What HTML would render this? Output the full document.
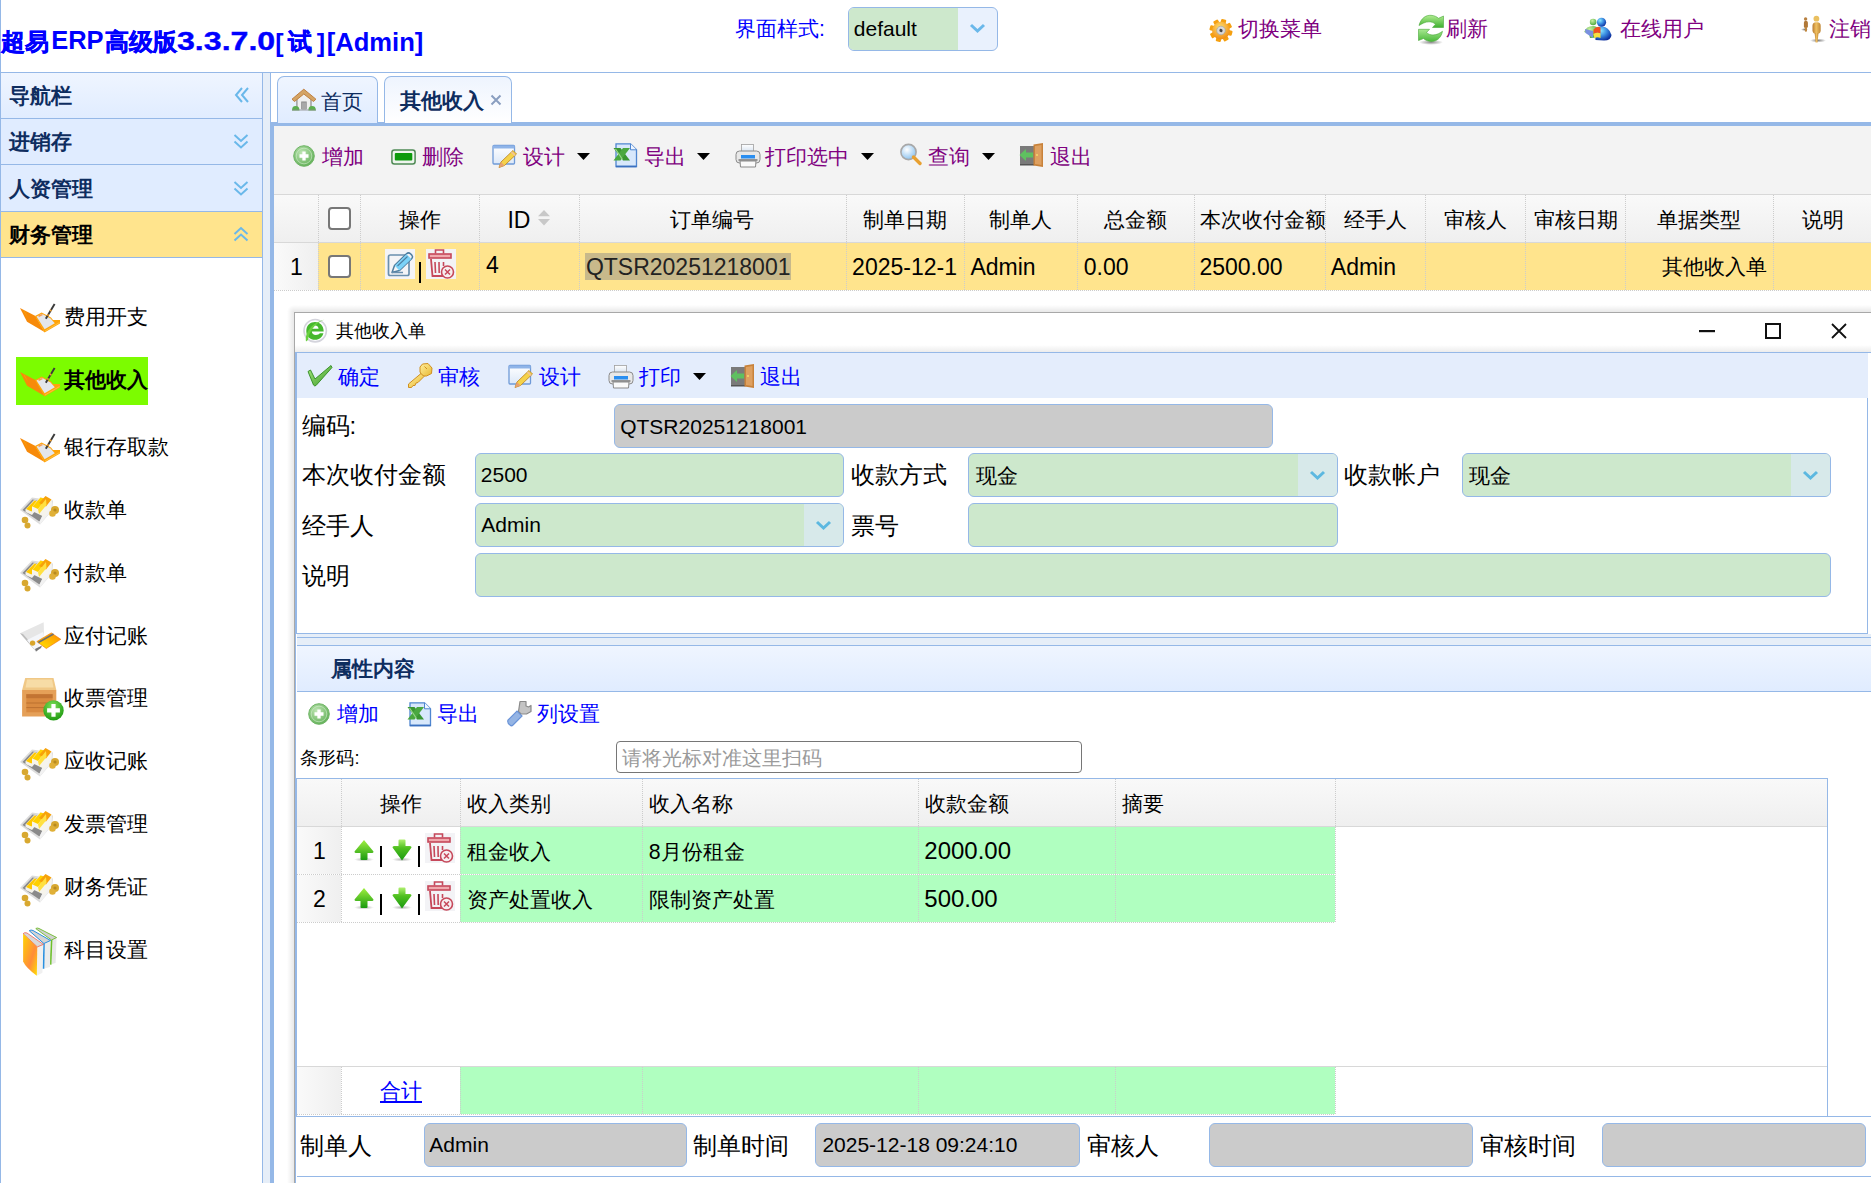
<!DOCTYPE html>
<html><head><meta charset="utf-8"><style>
html,body{margin:0;padding:0;}
body{width:1871px;height:1183px;overflow:hidden;position:relative;background:#fff;font-family:'Liberation Sans',sans-serif;}
body>div,body>svg{position:absolute;}
.t{position:absolute;white-space:nowrap;}
</style></head><body>
<div style="left:0px;top:0px;width:1px;height:1183px;background:#95b8e7"></div><div style="left:0px;top:72px;width:1871px;height:1px;background:#95b8e7"></div><div class="t" style="left:1.0px;top:30.1px;font-size:24px;line-height:24px;color:#0000ff;font-weight:bold;-webkit-text-stroke:0.5px #0000ff">超易</div><div class="t" style="left:51.2px;top:28.3px;font-size:25.5px;line-height:25.5px;color:#0000ff;font-weight:bold;">ERP</div><div class="t" style="left:104.5px;top:30.1px;font-size:24px;line-height:24px;color:#0000ff;font-weight:bold;-webkit-text-stroke:0.5px #0000ff">高级版</div><div class="t" style="left:177.2px;top:27.9px;font-size:26px;line-height:26px;color:#0000ff;font-weight:bold;transform:scaleX(1.235);transform-origin:0 0;-webkit-text-stroke:0.4px #0000ff">3.3.7.0</div><div class="t" style="left:275.2px;top:30.8px;font-size:25px;line-height:25px;color:#0000ff;font-weight:bold;">[</div><div class="t" style="left:288.0px;top:30.1px;font-size:24px;line-height:24px;color:#0000ff;font-weight:bold;-webkit-text-stroke:0.5px #0000ff">试</div><div class="t" style="left:316.8px;top:30.8px;font-size:25px;line-height:25px;color:#0000ff;font-weight:bold;">]</div><div class="t" style="left:326.7px;top:30.2px;font-size:25.6px;line-height:25.6px;color:#0000ff;font-weight:bold;">[Admin]</div><div class="t" style="left:735.1px;top:19.3px;font-size:21.3px;line-height:21.3px;color:#0000ff;">界面样式:</div><div style="left:848px;top:7px;width:148px;height:42px;border:1px solid #95b8e7;border-radius:6px;background:#e9f1fd"></div><div style="left:849px;top:8px;width:109px;height:42px;background:#cde8cc;border-radius:5px 0 0 5px"></div><div class="t" style="left:853.8px;top:18.2px;font-size:21px;line-height:21px;color:#000;">default</div><svg style="position:absolute;left:969px;top:23px" width="17" height="11" viewBox="0 0 17 11"><path d="M2 2 L8.5 8 L15 2" fill="none" stroke="#6ab8ea" stroke-width="3"/></svg><svg style="position:absolute;left:1209px;top:18px" width="25" height="25" viewBox="0 0 25 25"><defs><radialGradient id="gg" cx="40%" cy="35%" r="70%"><stop offset="0" stop-color="#ffe070"/><stop offset="1" stop-color="#f08a10"/></radialGradient></defs><g transform="translate(12 12.5) rotate(15)"><rect x="-2.6" y="-11.5" width="5.2" height="6" rx="1" fill="#f5a010" transform="rotate(0)"/><rect x="-2.6" y="-11.5" width="5.2" height="6" rx="1" fill="#f5a010" transform="rotate(45)"/><rect x="-2.6" y="-11.5" width="5.2" height="6" rx="1" fill="#f5a010" transform="rotate(90)"/><rect x="-2.6" y="-11.5" width="5.2" height="6" rx="1" fill="#f5a010" transform="rotate(135)"/><rect x="-2.6" y="-11.5" width="5.2" height="6" rx="1" fill="#f5a010" transform="rotate(180)"/><rect x="-2.6" y="-11.5" width="5.2" height="6" rx="1" fill="#f5a010" transform="rotate(225)"/><rect x="-2.6" y="-11.5" width="5.2" height="6" rx="1" fill="#f5a010" transform="rotate(270)"/><rect x="-2.6" y="-11.5" width="5.2" height="6" rx="1" fill="#f5a010" transform="rotate(315)"/><circle r="8.8" fill="url(#gg)"/><circle r="4.3" fill="#d8d8d8" stroke="#a0a0a0" stroke-width="0.6"/><circle r="1.6" fill="#444"/></g></svg><div class="t" style="left:1238.1px;top:19.0px;font-size:21.3px;line-height:21.3px;color:#800080;">切换菜单</div><svg style="position:absolute;left:1412px;top:10px" width="38" height="38" viewBox="0 0 38 38"><defs><linearGradient id="rg1" x1="0" y1="0" x2="0" y2="1"><stop offset="0" stop-color="#b0ec90"/><stop offset="1" stop-color="#3fb030"/></linearGradient><linearGradient id="rg2" x1="0" y1="0" x2="0" y2="1"><stop offset="0" stop-color="#a8e890"/><stop offset="1" stop-color="#4ab83a"/></linearGradient><radialGradient id="rsh"><stop offset="0" stop-color="rgba(0,0,0,0.45)"/><stop offset="1" stop-color="rgba(0,0,0,0)"/></radialGradient></defs><ellipse cx="19" cy="32.3" rx="12" ry="2.6" fill="url(#rsh)"/><path d="M7 15.5 C9 8 14 5 19 5.3 C23 5.6 25 7 26.5 8.3 L31.5 6 L31.5 17.5 L20.5 17.5 L23.5 14.2 C21.5 12.5 19.5 11.8 17 11.8 C13 11.8 10 13.8 7 15.5 Z" fill="url(#rg1)" stroke="#4aa83a" stroke-width="0.6"/><path d="M6.5 19.3 L17.5 19.3 L14.5 22.5 C16.5 24.3 18.5 25 21 25 C25 25 28 23 30.5 21.3 C29 28.5 24 31.8 19 31.5 C15 31.2 13 29.8 11.5 28.5 L6.5 30.5 Z" fill="url(#rg2)" stroke="#4aa83a" stroke-width="0.6"/></svg><div class="t" style="left:1445.6px;top:19.0px;font-size:21.3px;line-height:21.3px;color:#800080;">刷新</div><svg style="position:absolute;left:1578px;top:10px" width="38" height="38" viewBox="0 0 38 38"><defs><radialGradient id="ub" cx="35%" cy="30%" r="75%"><stop offset="0" stop-color="#8ae8ff"/><stop offset="0.5" stop-color="#3a8ae0"/><stop offset="1" stop-color="#0a2a9a"/></radialGradient><radialGradient id="ugr" cx="40%" cy="30%" r="70%"><stop offset="0" stop-color="#c8f0a0"/><stop offset="1" stop-color="#50a840"/></radialGradient></defs><circle cx="15.1" cy="12" r="3.3" fill="url(#ugr)"/><path d="M6.2 22 Q8 16 15 16 Q19 16 20 19 L19 27.5 L12 28 L11 24Z" fill="url(#ugr)"/><path d="M7 19 L15 21 L15 28 L7.5 23Z" fill="#7a90e0"/><circle cx="23.5" cy="12.3" r="4.6" fill="url(#ub)"/><path d="M17 22 Q18 16.5 23.5 16.5 Q31 16.5 33.5 25 Q33 30.5 26 30.5 L17.5 30 Z" fill="url(#ub)"/><path d="M15.5 19.5 Q19 15.5 22.5 17.5 L22.5 23.5 Q19 22 15.5 24Z" fill="#f05020"/><path d="M15.5 24 Q19 22 22.5 23.5 L22.5 28 Q19 26.5 16.5 28.5Z" fill="#f8e040"/></svg><div class="t" style="left:1620.3px;top:19.0px;font-size:21.3px;line-height:21.3px;color:#800080;">在线用户</div><svg style="position:absolute;left:1796px;top:10px" width="38" height="38" viewBox="0 0 38 38"><defs><radialGradient id="pshd"><stop offset="0" stop-color="rgba(0,0,0,0.5)"/><stop offset="1" stop-color="rgba(0,0,0,0)"/></radialGradient><linearGradient id="pgold" x1="0" y1="0" x2="1" y2="0"><stop offset="0" stop-color="#b87a30"/><stop offset="0.45" stop-color="#f0c060"/><stop offset="1" stop-color="#c08838"/></linearGradient></defs><ellipse cx="22" cy="30.5" rx="8" ry="2" fill="url(#pshd)"/><ellipse cx="8.5" cy="19.5" rx="3.5" ry="1.5" fill="url(#pshd)"/><circle cx="9.6" cy="9" r="1.7" fill="#b88040"/><rect x="7.9" y="10.8" width="4" height="7.5" rx="2" fill="#b07838"/><rect x="8.8" y="17" width="2.2" height="4.8" rx="1" fill="#c08840"/><circle cx="20.4" cy="8.7" r="2.9" fill="#eac060"/><rect x="16.5" y="12.2" width="8.2" height="11.5" rx="3.5" fill="url(#pgold)"/><path d="M18.6 23 L22.5 23 L21.5 32.4 L19.6 32.4Z" fill="url(#pgold)"/></svg><div class="t" style="left:1828.6px;top:19.0px;font-size:21.3px;line-height:21.3px;color:#800080;">注销</div><div style="left:262px;top:73px;width:1px;height:1110px;background:#95b8e7"></div><div style="left:263px;top:73px;width:7px;height:1110px;background:#e6eef8"></div><div style="left:1px;top:73px;width:261px;height:45px;background:linear-gradient(#eff5ff,#e0ecff)"></div><div style="left:1px;top:118px;width:261px;height:1px;background:#95b8e7"></div><div class="t" style="left:8.6px;top:86.4px;font-size:21.3px;line-height:21.3px;color:#0e2d5f;font-weight:bold;">导航栏</div><div style="left:1px;top:119px;width:261px;height:45px;background:#e0ecff"></div><div style="left:1px;top:164px;width:261px;height:1px;background:#95b8e7"></div><div class="t" style="left:8.6px;top:132.4px;font-size:21.3px;line-height:21.3px;color:#0e2d5f;font-weight:bold;">进销存</div><div style="left:1px;top:165px;width:261px;height:46px;background:#e0ecff"></div><div style="left:1px;top:211px;width:261px;height:1px;background:#95b8e7"></div><div class="t" style="left:8.6px;top:178.9px;font-size:21.3px;line-height:21.3px;color:#0e2d5f;font-weight:bold;">人资管理</div><div style="left:1px;top:212px;width:261px;height:45px;background:#ffe48d"></div><div style="left:1px;top:257px;width:261px;height:1px;background:#95b8e7"></div><div class="t" style="left:8.6px;top:225.4px;font-size:21.3px;line-height:21.3px;color:#000;font-weight:bold;">财务管理</div><svg style="position:absolute;left:233px;top:86px" width="17" height="18" viewBox="0 0 17 18"><path d="M9 2 L3 9 L9 16 M15 2 L9 9 L15 16" fill="none" stroke="#6ab8ea" stroke-width="2"/></svg><svg style="position:absolute;left:233px;top:133px" width="16" height="17" viewBox="0 0 16 17"><path d="M1.5 2 L8 8 L14.5 2 M1.5 8.5 L8 14.5 L14.5 8.5" fill="none" stroke="#6ab8ea" stroke-width="2"/></svg><svg style="position:absolute;left:233px;top:180px" width="16" height="17" viewBox="0 0 16 17"><path d="M1.5 2 L8 8 L14.5 2 M1.5 8.5 L8 14.5 L14.5 8.5" fill="none" stroke="#6ab8ea" stroke-width="2"/></svg><svg style="position:absolute;left:233px;top:226px" width="16" height="17" viewBox="0 0 16 17"><path d="M1.5 8 L8 2 L14.5 8 M1.5 14.5 L8 8.5 L14.5 14.5" fill="none" stroke="#6ab8ea" stroke-width="2"/></svg><svg style="position:absolute;left:16px;top:298px" width="48" height="40" viewBox="0 0 48 40"><path d="M4 10 L19.5 18 L28.5 34 L11 23.7 Z" fill="#f78a0a"/><path d="M7 12 L12 20 L9 14Z" fill="#ffb000"/><path d="M19 18 L25.7 14.6 L35 19.5 L37 22 L44 22 L44 25.5 L28.5 34.5 Z" fill="#ffa40a"/><path d="M20.5 18.5 L26 15.8 L34.5 20.5 L38.8 25.2 L28.6 31.2 Z" fill="#e4e6ea"/><path d="M22 17.5 L26 16 L27 17 L23 19Z" fill="#f59a50"/><path d="M29.8 20.8 L38.6 6" stroke="#3a3a3a" stroke-width="1.9"/><path d="M31.5 17.8 L32.3 16.4 M34.2 13.2 L35 11.8" stroke="#f0a030" stroke-width="1.9"/><path d="M29 33 L43.5 24.5" stroke="#ffc040" stroke-width="1"/></svg><div class="t" style="left:63.8px;top:307.2px;font-size:21.3px;line-height:21.3px;color:#000;">费用开支</div><div style="left:16px;top:357px;width:132px;height:48px;background:#7cfc00"></div><svg style="position:absolute;left:16px;top:362px" width="48" height="40" viewBox="0 0 48 40"><path d="M4 10 L19.5 18 L28.5 34 L11 23.7 Z" fill="#f78a0a"/><path d="M7 12 L12 20 L9 14Z" fill="#ffb000"/><path d="M19 18 L25.7 14.6 L35 19.5 L37 22 L44 22 L44 25.5 L28.5 34.5 Z" fill="#ffa40a"/><path d="M20.5 18.5 L26 15.8 L34.5 20.5 L38.8 25.2 L28.6 31.2 Z" fill="#e4e6ea"/><path d="M22 17.5 L26 16 L27 17 L23 19Z" fill="#f59a50"/><path d="M29.8 20.8 L38.6 6" stroke="#3a3a3a" stroke-width="1.9"/><path d="M31.5 17.8 L32.3 16.4 M34.2 13.2 L35 11.8" stroke="#f0a030" stroke-width="1.9"/><path d="M29 33 L43.5 24.5" stroke="#ffc040" stroke-width="1"/></svg><div class="t" style="left:63.8px;top:370.1px;font-size:21.3px;line-height:21.3px;color:#000;font-weight:bold;">其他收入</div><svg style="position:absolute;left:16px;top:428px" width="48" height="40" viewBox="0 0 48 40"><path d="M4 10 L19.5 18 L28.5 34 L11 23.7 Z" fill="#f78a0a"/><path d="M7 12 L12 20 L9 14Z" fill="#ffb000"/><path d="M19 18 L25.7 14.6 L35 19.5 L37 22 L44 22 L44 25.5 L28.5 34.5 Z" fill="#ffa40a"/><path d="M20.5 18.5 L26 15.8 L34.5 20.5 L38.8 25.2 L28.6 31.2 Z" fill="#e4e6ea"/><path d="M22 17.5 L26 16 L27 17 L23 19Z" fill="#f59a50"/><path d="M29.8 20.8 L38.6 6" stroke="#3a3a3a" stroke-width="1.9"/><path d="M31.5 17.8 L32.3 16.4 M34.2 13.2 L35 11.8" stroke="#f0a030" stroke-width="1.9"/><path d="M29 33 L43.5 24.5" stroke="#ffc040" stroke-width="1"/></svg><div class="t" style="left:63.8px;top:437.4px;font-size:21.3px;line-height:21.3px;color:#000;">银行存取款</div><svg style="position:absolute;left:16px;top:490px" width="48" height="40" viewBox="0 0 48 40"><path d="M4 20 L16 7.5 L37 10.5 L36 20.5 L24 34.5 Z" fill="#dcdcdc"/><path d="M6.5 20 L16.5 9.5 L33 12.5 L23.5 31.5 Z" fill="#8a8a8a"/><path d="M23.5 31.5 L33 12.5 L36 11 L35.5 20.5 L24 34.5Z" fill="#f2f2f2"/><path d="M9.5 19.5 L18 10 L24 11.5 L24 15 L16 25 L9.5 22Z" fill="#f4f2ea"/><path d="M10 19 L18.5 10.5 L23.5 12 L15.5 21.5Z" fill="#ffc800"/><path d="M16 17 L24 7 L35.5 10 L35.5 14 L28.5 27 L16 21Z" fill="#f6f4ec"/><path d="M16.5 16.5 L24.5 7.5 L30 9 L22 19Z" fill="#ffd000"/><path d="M23 13 L29.5 6 L35.5 9.5 L30 16.5Z" fill="#f7a20a"/><path d="M22 19 L30 9 L30.5 15 L23 24Z" fill="#ffe040"/><circle cx="39" cy="20" r="4" fill="#d8a830"/><circle cx="36.5" cy="23.5" r="3.3" fill="#e0b038"/><circle cx="39" cy="20" r="1.6" fill="#b88a20"/><circle cx="9" cy="30" r="3.3" fill="#d8a830"/><circle cx="11.5" cy="35.5" r="3" fill="#d8a830"/></svg><div class="t" style="left:63.8px;top:499.9px;font-size:21.3px;line-height:21.3px;color:#000;">收款单</div><svg style="position:absolute;left:16px;top:553px" width="48" height="40" viewBox="0 0 48 40"><path d="M4 20 L16 7.5 L37 10.5 L36 20.5 L24 34.5 Z" fill="#dcdcdc"/><path d="M6.5 20 L16.5 9.5 L33 12.5 L23.5 31.5 Z" fill="#8a8a8a"/><path d="M23.5 31.5 L33 12.5 L36 11 L35.5 20.5 L24 34.5Z" fill="#f2f2f2"/><path d="M9.5 19.5 L18 10 L24 11.5 L24 15 L16 25 L9.5 22Z" fill="#f4f2ea"/><path d="M10 19 L18.5 10.5 L23.5 12 L15.5 21.5Z" fill="#ffc800"/><path d="M16 17 L24 7 L35.5 10 L35.5 14 L28.5 27 L16 21Z" fill="#f6f4ec"/><path d="M16.5 16.5 L24.5 7.5 L30 9 L22 19Z" fill="#ffd000"/><path d="M23 13 L29.5 6 L35.5 9.5 L30 16.5Z" fill="#f7a20a"/><path d="M22 19 L30 9 L30.5 15 L23 24Z" fill="#ffe040"/><circle cx="39" cy="20" r="4" fill="#d8a830"/><circle cx="36.5" cy="23.5" r="3.3" fill="#e0b038"/><circle cx="39" cy="20" r="1.6" fill="#b88a20"/><circle cx="9" cy="30" r="3.3" fill="#d8a830"/><circle cx="11.5" cy="35.5" r="3" fill="#d8a830"/></svg><div class="t" style="left:63.8px;top:563.4px;font-size:21.3px;line-height:21.3px;color:#000;">付款单</div><svg style="position:absolute;left:14px;top:615px" width="52" height="45" viewBox="0 0 52 45"><defs><linearGradient id="cg" x1="0" y1="1" x2="1" y2="0"><stop offset="0" stop-color="#ffe800"/><stop offset="1" stop-color="#ff8a00"/></linearGradient></defs><path d="M6 18.3 L29.7 7.2 L30 20 L22 36.5 Z" fill="#e6e6e6"/><path d="M6 18.3 L22 36.5 L23.5 35.5 L9 19Z" fill="#bdbdbd"/><path d="M13 25 L29 17 L30 20 L22 36.5Z" fill="#f4f6fa"/><path d="M21 34 L28 30.5 L27 33 L22 36.5Z" fill="#777"/><circle cx="18.6" cy="28.1" r="2.7" fill="#d9a52a"/><path d="M22.8 26.6 L37.3 17.9 L46.8 24.3 L32.3 33.5 Z" fill="url(#cg)" stroke="#f07000" stroke-width="0.6"/><path d="M24.3 27.6 L39.5 18.9" stroke="#6f6f6f" stroke-width="1.7"/></svg><div class="t" style="left:63.8px;top:626.2px;font-size:21.3px;line-height:21.3px;color:#000;">应付记账</div><svg style="position:absolute;left:14px;top:670px" width="56" height="55" viewBox="0 0 56 55"><defs><radialGradient id="pg" cx="45%" cy="30%" r="70%"><stop offset="0" stop-color="#7ee05a"/><stop offset="1" stop-color="#1f9a10"/></radialGradient></defs><path d="M11.2 7.9 H39.5 L42.3 20 H8.1Z" fill="#f0c886"/><path d="M13 9.5 H38 L39.5 17.5 H11.5Z" fill="#f7dca6"/><rect x="8.1" y="20" width="34.2" height="26.5" fill="#e5a058"/><rect x="12.3" y="24.2" width="26.3" height="18.1" fill="#d98a40"/><rect x="12.3" y="24.2" width="26.3" height="4" fill="#c27433"/><path d="M12.3 33 H38.6 M12.3 37.6 H38.6" stroke="#b86d2e" stroke-width="0.9"/><circle cx="39.5" cy="40.4" r="10.2" fill="url(#pg)"/><path d="M39.5 34 V46.8 M33.1 40.4 H45.9" stroke="#fff" stroke-width="4.2"/></svg><div class="t" style="left:63.8px;top:688.4px;font-size:21.3px;line-height:21.3px;color:#000;">收票管理</div><svg style="position:absolute;left:16px;top:742px" width="48" height="40" viewBox="0 0 48 40"><path d="M4 20 L16 7.5 L37 10.5 L36 20.5 L24 34.5 Z" fill="#dcdcdc"/><path d="M6.5 20 L16.5 9.5 L33 12.5 L23.5 31.5 Z" fill="#8a8a8a"/><path d="M23.5 31.5 L33 12.5 L36 11 L35.5 20.5 L24 34.5Z" fill="#f2f2f2"/><path d="M9.5 19.5 L18 10 L24 11.5 L24 15 L16 25 L9.5 22Z" fill="#f4f2ea"/><path d="M10 19 L18.5 10.5 L23.5 12 L15.5 21.5Z" fill="#ffc800"/><path d="M16 17 L24 7 L35.5 10 L35.5 14 L28.5 27 L16 21Z" fill="#f6f4ec"/><path d="M16.5 16.5 L24.5 7.5 L30 9 L22 19Z" fill="#ffd000"/><path d="M23 13 L29.5 6 L35.5 9.5 L30 16.5Z" fill="#f7a20a"/><path d="M22 19 L30 9 L30.5 15 L23 24Z" fill="#ffe040"/><circle cx="39" cy="20" r="4" fill="#d8a830"/><circle cx="36.5" cy="23.5" r="3.3" fill="#e0b038"/><circle cx="39" cy="20" r="1.6" fill="#b88a20"/><circle cx="9" cy="30" r="3.3" fill="#d8a830"/><circle cx="11.5" cy="35.5" r="3" fill="#d8a830"/></svg><div class="t" style="left:63.8px;top:751.4px;font-size:21.3px;line-height:21.3px;color:#000;">应收记账</div><svg style="position:absolute;left:16px;top:805px" width="48" height="40" viewBox="0 0 48 40"><path d="M4 20 L16 7.5 L37 10.5 L36 20.5 L24 34.5 Z" fill="#dcdcdc"/><path d="M6.5 20 L16.5 9.5 L33 12.5 L23.5 31.5 Z" fill="#8a8a8a"/><path d="M23.5 31.5 L33 12.5 L36 11 L35.5 20.5 L24 34.5Z" fill="#f2f2f2"/><path d="M9.5 19.5 L18 10 L24 11.5 L24 15 L16 25 L9.5 22Z" fill="#f4f2ea"/><path d="M10 19 L18.5 10.5 L23.5 12 L15.5 21.5Z" fill="#ffc800"/><path d="M16 17 L24 7 L35.5 10 L35.5 14 L28.5 27 L16 21Z" fill="#f6f4ec"/><path d="M16.5 16.5 L24.5 7.5 L30 9 L22 19Z" fill="#ffd000"/><path d="M23 13 L29.5 6 L35.5 9.5 L30 16.5Z" fill="#f7a20a"/><path d="M22 19 L30 9 L30.5 15 L23 24Z" fill="#ffe040"/><circle cx="39" cy="20" r="4" fill="#d8a830"/><circle cx="36.5" cy="23.5" r="3.3" fill="#e0b038"/><circle cx="39" cy="20" r="1.6" fill="#b88a20"/><circle cx="9" cy="30" r="3.3" fill="#d8a830"/><circle cx="11.5" cy="35.5" r="3" fill="#d8a830"/></svg><div class="t" style="left:63.8px;top:814.4px;font-size:21.3px;line-height:21.3px;color:#000;">发票管理</div><svg style="position:absolute;left:16px;top:868px" width="48" height="40" viewBox="0 0 48 40"><path d="M4 20 L16 7.5 L37 10.5 L36 20.5 L24 34.5 Z" fill="#dcdcdc"/><path d="M6.5 20 L16.5 9.5 L33 12.5 L23.5 31.5 Z" fill="#8a8a8a"/><path d="M23.5 31.5 L33 12.5 L36 11 L35.5 20.5 L24 34.5Z" fill="#f2f2f2"/><path d="M9.5 19.5 L18 10 L24 11.5 L24 15 L16 25 L9.5 22Z" fill="#f4f2ea"/><path d="M10 19 L18.5 10.5 L23.5 12 L15.5 21.5Z" fill="#ffc800"/><path d="M16 17 L24 7 L35.5 10 L35.5 14 L28.5 27 L16 21Z" fill="#f6f4ec"/><path d="M16.5 16.5 L24.5 7.5 L30 9 L22 19Z" fill="#ffd000"/><path d="M23 13 L29.5 6 L35.5 9.5 L30 16.5Z" fill="#f7a20a"/><path d="M22 19 L30 9 L30.5 15 L23 24Z" fill="#ffe040"/><circle cx="39" cy="20" r="4" fill="#d8a830"/><circle cx="36.5" cy="23.5" r="3.3" fill="#e0b038"/><circle cx="39" cy="20" r="1.6" fill="#b88a20"/><circle cx="9" cy="30" r="3.3" fill="#d8a830"/><circle cx="11.5" cy="35.5" r="3" fill="#d8a830"/></svg><div class="t" style="left:63.8px;top:877.4px;font-size:21.3px;line-height:21.3px;color:#000;">财务凭证</div><svg style="position:absolute;left:14px;top:920px" width="56" height="60" viewBox="0 0 56 60"><defs><linearGradient id="bg1" x1="0" y1="0" x2="1" y2="1"><stop offset="0" stop-color="#ffd400"/><stop offset="0.6" stop-color="#ff8c3a"/><stop offset="1" stop-color="#ffe000"/></linearGradient></defs><path d="M21.8 8.6 L42.6 17.5 L41.6 43 L36.5 44.6 L37.5 20 Z" fill="#e8e8e8"/><path d="M21.8 8.6 Q23 7.5 25 8.5 L42.6 17.5 L37.5 20 Z" fill="#d0d0d0" stroke="#7cc040" stroke-width="1"/><path d="M37.5 20 L36.5 44.6" stroke="#6cbf2a" stroke-width="1.8"/><path d="M15.2 10.7 L36.5 20.5 L36 47 L29.4 48.7 L29.9 23.5 Z" fill="#ececec"/><path d="M15.2 10.7 Q17 9.5 19 10.5 L36.5 20.5 L29.9 23.5 Z" fill="#d4d4d4" stroke="#2a8fe0" stroke-width="1"/><path d="M29.9 23.5 L29.4 48.7" stroke="#2a90e0" stroke-width="1.8"/><path d="M9.1 13.7 L29.4 24.4 L28.4 52.8 L22.8 55.8 L23.3 26.9 Z" fill="#f0f0f0"/><path d="M9.1 13.7 Q10.5 12 13 13 L29.4 24.4 L23.3 26.9 Z" fill="#d8d8d8" stroke="#f06050" stroke-width="0.8"/><path d="M9.1 13.7 L23.3 26.9 L22.8 55.8 Q12 48 9.1 41.6 Z" fill="url(#bg1)"/></svg><div class="t" style="left:63.8px;top:940.4px;font-size:21.3px;line-height:21.3px;color:#000;">科目设置</div><div style="left:270px;top:73px;width:1px;height:50px;background:#95b8e7"></div><div style="left:270px;top:122px;width:1601px;height:4px;background:#95b8e7"></div><div style="left:270px;top:122px;width:4px;height:1061px;background:#95b8e7"></div><div style="left:277px;top:76px;width:99px;height:46px;border:1px solid #95b8e7;border-bottom:none;border-radius:7px 7px 0 0;background:linear-gradient(#eff5ff,#e0ecff)"></div><div style="left:384px;top:76px;width:126px;height:46px;border:1px solid #95b8e7;border-bottom:none;border-radius:7px 7px 0 0;background:linear-gradient(#eef4fe,#ffffff)"></div><svg style="position:absolute;left:286px;top:82px" width="36" height="34" viewBox="0 0 36 34"><path d="M10.9 13.8 L17.8 9.5 L25 13.8 L25 27.3 L10.9 27.3Z" fill="#efefef"/><path d="M10.9 14 V27 M25 14 V27" stroke="#999" stroke-width="1.4"/><rect x="15.2" y="19.5" width="5.5" height="7.8" fill="#8a8a8a"/><rect x="16" y="20.5" width="4" height="6.8" fill="#a8a8a8"/><path d="M6 17.2 L17.8 7.2 L29.9 17.2 L27.5 19.5 L17.8 12 L8.5 19.5 Z" fill="#d4a464" stroke="#c08040" stroke-width="1"/><path d="M6 28.4 Q6 24 9.5 24 Q13.5 24 13.5 28.4Z" fill="#5cae50"/><path d="M22.4 28.4 Q22.4 24 26 24 Q29.9 24 29.9 28.4Z" fill="#5cae50"/><path d="M6 28 H29.9" stroke="#888" stroke-width="0.8"/></svg><div class="t" style="left:320.6px;top:91.6px;font-size:21.3px;line-height:21.3px;color:#0e2d5f;">首页</div><div class="t" style="left:400.0px;top:90.9px;font-size:21.3px;line-height:21.3px;color:#0e2d5f;font-weight:bold;">其他收入</div><svg style="position:absolute;left:490px;top:94px" width="12" height="12" viewBox="0 0 12 12"><path d="M1.5 1.5 L10.5 10.5 M10.5 1.5 L1.5 10.5" stroke="#8a9ec0" stroke-width="2"/></svg><div style="left:274px;top:126px;width:1597px;height:69px;background:#f3f3f3"></div><svg style="position:absolute;left:293px;top:145px" width="22" height="22" viewBox="0 0 22 22"><defs><radialGradient id="ga293145" cx="40%" cy="35%" r="70%"><stop offset="0" stop-color="#bfe6b4"/><stop offset="1" stop-color="#5fae55"/></radialGradient></defs><circle cx="11" cy="11" r="10.3" fill="url(#ga293145)" stroke="#6fb565" stroke-width="1"/><circle cx="11" cy="11" r="7.8" fill="none" stroke="#d8f0d2" stroke-width="0.8" opacity="0.7"/><path d="M11 6.5 V15.5 M6.5 11 H15.5" stroke="#fff" stroke-width="3.3"/></svg><div class="t" style="left:322.0px;top:147.4px;font-size:21.3px;line-height:21.3px;color:#800080;">增加</div><svg style="position:absolute;left:391px;top:149px" width="25" height="16" viewBox="0 0 25 16"><rect x="0.9" y="0.9" width="23.2" height="14" rx="2.5" fill="#eef4ee" stroke="#4f8a55" stroke-width="1.5"/><rect x="3.8" y="4" width="17.5" height="7.5" rx="1" fill="#0c9a0c"/></svg><div class="t" style="left:422.0px;top:147.4px;font-size:21.3px;line-height:21.3px;color:#800080;">删除</div><svg style="position:absolute;left:492px;top:144px" width="26" height="25" viewBox="0 0 26 25"><defs><linearGradient id="dsg" x1="0" y1="0" x2="0" y2="1"><stop offset="0" stop-color="#ffffff"/><stop offset="1" stop-color="#dce8f8"/></linearGradient></defs><rect x="1" y="1.5" width="21.5" height="18.5" rx="1" fill="url(#dsg)" stroke="#6f9ad8" stroke-width="1.3"/><rect x="1" y="1.5" width="21.5" height="3" fill="#8fb4e8"/><path d="M7 23.5 L9 18 L21 6.5 L24.5 10 L12.5 21.5 Z" fill="#f5d24a" stroke="#c08a28" stroke-width="0.9"/><path d="M7 23.5 L9 18 L12.5 21.5Z" fill="#e8a070"/><path d="M19.5 8 L23 11.5" stroke="#f0c0a0" stroke-width="1.5"/></svg><div class="t" style="left:523.1px;top:147.4px;font-size:21.3px;line-height:21.3px;color:#800080;">设计</div><svg style="position:absolute;left:577px;top:153px" width="13" height="7" viewBox="0 0 13 7"><path d="M0 0 H13 L6.5 7Z" fill="#000"/></svg><svg style="position:absolute;left:613px;top:143px" width="26" height="25" viewBox="0 0 26 25"><path d="M3 0.8 H17.5 L23.5 6.8 V23.5 H3 Z" fill="#d8e8fb" stroke="#4f86d0" stroke-width="1.3"/><path d="M3 23.5 H23.5" stroke="#3a70c0" stroke-width="1.6"/><path d="M17.5 0.8 V6.8 H23.5" fill="#eef5ff" stroke="#4f86d0" stroke-width="1"/><path d="M0.5 5 L7.5 5 L17 17.5 L10 17.5 Z" fill="#3a9632"/><path d="M17 5 L10 5 L0.5 17.5 L7.5 17.5 Z" fill="#4aa840"/><path d="M2.5 6 L9.5 16.5" stroke="#9ad88a" stroke-width="1.2"/></svg><div class="t" style="left:643.6px;top:147.4px;font-size:21.3px;line-height:21.3px;color:#800080;">导出</div><svg style="position:absolute;left:697px;top:153px" width="13" height="7" viewBox="0 0 13 7"><path d="M0 0 H13 L6.5 7Z" fill="#000"/></svg><svg style="position:absolute;left:735px;top:144px" width="26" height="24" viewBox="0 0 26 24"><defs><linearGradient id="ppg" x1="0" y1="0" x2="0" y2="1"><stop offset="0" stop-color="#ffffff"/><stop offset="1" stop-color="#c8d8ea"/></linearGradient></defs><rect x="6.5" y="0.5" width="12" height="10" fill="url(#ppg)" stroke="#a0a0a0" stroke-width="0.8"/><rect x="1" y="7" width="24" height="12" rx="3.5" fill="#e8e8e8" stroke="#8a8a8a" stroke-width="1"/><rect x="6" y="11" width="14" height="3.5" fill="#2a8ef0"/><path d="M3.5 16 H22.5" stroke="#666" stroke-width="1.3"/><path d="M5 17 L21 17 L20.5 23 L5.5 23Z" fill="#fafafa" stroke="#8a8a8a" stroke-width="1"/></svg><div class="t" style="left:765.3px;top:147.4px;font-size:21.3px;line-height:21.3px;color:#800080;">打印选中</div><svg style="position:absolute;left:861px;top:153px" width="13" height="7" viewBox="0 0 13 7"><path d="M0 0 H13 L6.5 7Z" fill="#000"/></svg><svg style="position:absolute;left:899px;top:143px" width="24" height="23" viewBox="0 0 24 23"><defs><radialGradient id="sg" cx="40%" cy="35%" r="65%"><stop offset="0" stop-color="#ffffff"/><stop offset="1" stop-color="#8ec4f0"/></radialGradient></defs><circle cx="9.5" cy="9" r="7.6" fill="url(#sg)" stroke="#a8a8a8" stroke-width="1.6"/><path d="M14.5 14 L21 20.5" stroke="#e8a030" stroke-width="3.4" stroke-linecap="round"/></svg><div class="t" style="left:928.3px;top:147.4px;font-size:21.3px;line-height:21.3px;color:#800080;">查询</div><svg style="position:absolute;left:982px;top:153px" width="13" height="7" viewBox="0 0 13 7"><path d="M0 0 H13 L6.5 7Z" fill="#000"/></svg><svg style="position:absolute;left:1019px;top:143px" width="25" height="25" viewBox="0 0 25 25"><rect x="1" y="3" width="14.5" height="19" fill="#7a7a7a"/><rect x="1" y="21" width="14.5" height="1.5" fill="#555"/><path d="M14.5 1.5 L24 0 V24 L14.5 22.5Z" fill="#c8823a"/><path d="M16 3 L22.5 2 V22 L16 21Z" fill="#dea060"/><circle cx="18" cy="12" r="0.9" fill="#f8e070"/><path d="M0.5 12 L7 6 V9.5 H14 V14.5 H7 V18Z" fill="#5fc060"/></svg><div class="t" style="left:1049.9px;top:147.4px;font-size:21.3px;line-height:21.3px;color:#800080;">退出</div><div style="left:274px;top:194px;width:1597px;height:1px;background:#d8d8d8"></div><div style="left:274px;top:195px;width:1597px;height:47px;background:linear-gradient(#f9f9f9,#efefef)"></div><div style="left:274px;top:242px;width:1597px;height:1px;background:#d8d8d8"></div><div style="left:274px;top:243px;width:44px;height:47px;background:linear-gradient(90deg,#fafafa,#efefef)"></div><div style="left:318px;top:243px;width:1553px;height:47px;background:#ffe48d"></div><div style="left:274px;top:290px;width:1597px;height:1px;background:repeating-linear-gradient(90deg,#ccc 0 1px,transparent 1px 2px)"></div><div style="left:318px;top:195px;width:1px;height:95px;background:repeating-linear-gradient(#ccc 0 1px,transparent 1px 2px)"></div><div style="left:360px;top:195px;width:1px;height:95px;background:repeating-linear-gradient(#ccc 0 1px,transparent 1px 2px)"></div><div style="left:479px;top:195px;width:1px;height:95px;background:repeating-linear-gradient(#ccc 0 1px,transparent 1px 2px)"></div><div style="left:579px;top:195px;width:1px;height:95px;background:repeating-linear-gradient(#ccc 0 1px,transparent 1px 2px)"></div><div style="left:846px;top:195px;width:1px;height:95px;background:repeating-linear-gradient(#ccc 0 1px,transparent 1px 2px)"></div><div style="left:964px;top:195px;width:1px;height:95px;background:repeating-linear-gradient(#ccc 0 1px,transparent 1px 2px)"></div><div style="left:1077px;top:195px;width:1px;height:95px;background:repeating-linear-gradient(#ccc 0 1px,transparent 1px 2px)"></div><div style="left:1194px;top:195px;width:1px;height:95px;background:repeating-linear-gradient(#ccc 0 1px,transparent 1px 2px)"></div><div style="left:1325px;top:195px;width:1px;height:95px;background:repeating-linear-gradient(#ccc 0 1px,transparent 1px 2px)"></div><div style="left:1425px;top:195px;width:1px;height:95px;background:repeating-linear-gradient(#ccc 0 1px,transparent 1px 2px)"></div><div style="left:1525px;top:195px;width:1px;height:95px;background:repeating-linear-gradient(#ccc 0 1px,transparent 1px 2px)"></div><div style="left:1625px;top:195px;width:1px;height:95px;background:repeating-linear-gradient(#ccc 0 1px,transparent 1px 2px)"></div><div style="left:1773px;top:195px;width:1px;height:95px;background:repeating-linear-gradient(#ccc 0 1px,transparent 1px 2px)"></div><div style="left:328px;top:207px;width:19px;height:19px;border:2px solid #777;border-radius:4px;background:#fff"></div><div style="left:328px;top:255px;width:19px;height:19px;border:2px solid #777;border-radius:4px;background:#fff"></div><div class="t" style="left:398.6px;top:210.0px;font-size:21.3px;line-height:21.3px;color:#000;">操作</div><div class="t" style="left:670.4px;top:210.0px;font-size:21.3px;line-height:21.3px;color:#000;">订单编号</div><div class="t" style="left:862.8px;top:210.0px;font-size:21.3px;line-height:21.3px;color:#000;">制单日期</div><div class="t" style="left:989.2px;top:210.0px;font-size:21.3px;line-height:21.3px;color:#000;">制单人</div><div class="t" style="left:1103.6px;top:210.0px;font-size:21.3px;line-height:21.3px;color:#000;">总金额</div><div class="t" style="left:1343.6px;top:210.0px;font-size:21.3px;line-height:21.3px;color:#000;">经手人</div><div class="t" style="left:1444.2px;top:210.0px;font-size:21.3px;line-height:21.3px;color:#000;">审核人</div><div class="t" style="left:1534.1px;top:210.0px;font-size:21.3px;line-height:21.3px;color:#000;">审核日期</div><div class="t" style="left:1656.9px;top:210.0px;font-size:21.3px;line-height:21.3px;color:#000;">单据类型</div><div class="t" style="left:1801.6px;top:210.0px;font-size:21.3px;line-height:21.3px;color:#000;">说明</div><div style="left:1195px;top:195px;width:130px;height:47px;overflow:hidden"><div class="t" style="left:5.2px;top:15.0px;font-size:21.3px;line-height:21.3px;color:#000;">本次收付金额</div></div><div class="t" style="left:507.4px;top:208.9px;font-size:23px;line-height:23px;color:#000;">ID</div><svg style="position:absolute;left:537px;top:208px" width="14" height="22" viewBox="0 0 14 22"><path d="M7 2 L13 8.2 H1Z M7 17.4 L13 11 H1Z" fill="#c8c8c8"/></svg><div class="t" style="left:289.9px;top:255.8px;font-size:23px;line-height:23px;color:#000;">1</div><svg style="position:absolute;left:385px;top:249px" width="30" height="30" viewBox="0 0 30 30"><rect width="30" height="30" fill="#f4f4f7"/><rect x="3.5" y="6" width="20.5" height="20.5" rx="1.8" fill="none" stroke="#6a8fae" stroke-width="1.7"/><path d="M7 23.5 L9.5 16.5 L21.5 4.8 Q23.5 3 25.5 4.8 L26.8 6.1 Q28.3 8 26.6 9.8 L14.5 21.5 Z" fill="#f4f4f7" stroke="#4f7ea0" stroke-width="1.5" stroke-linejoin="round"/><path d="M9.8 16.8 L21.6 5.2 L26.3 9.9 L14.3 21.4 Z" fill="#7cd2f8"/><path d="M12.5 17 L22.5 7.5" stroke="#4f7ea0" stroke-width="1.1"/><path d="M7 23.5 H18" stroke="#6a8fae" stroke-width="1.5"/></svg><div style="left:419px;top:262px;width:2px;height:21px;background:#000"></div><svg style="position:absolute;left:426px;top:249px" width="30" height="30" viewBox="0 0 30 30"><rect width="30" height="30" fill="#f3f3f6"/><path d="M9.5 4.5 V1 H17.5 V4.5" fill="none" stroke="#c6485a" stroke-width="1.6"/><rect x="3" y="5" width="22" height="4" fill="#f0a9ae" stroke="#c6485a" stroke-width="1.6"/><path d="M5 10 L6.5 27 H17" fill="none" stroke="#c6485a" stroke-width="1.8"/><path d="M9 13 L9.5 24 M13 13 L13.2 24 M17.5 13 L17.5 17" stroke="#c6485a" stroke-width="1.6"/><circle cx="21.5" cy="23" r="6" fill="#f7eef0" stroke="#c6485a" stroke-width="1.6"/><path d="M19 20.5 L24 25.5 M24 20.5 L19 25.5" stroke="#c6485a" stroke-width="1.5"/></svg><div class="t" style="left:485.9px;top:253.8px;font-size:23px;line-height:23px;color:#000;">4</div><div style="left:585px;top:253px;width:206px;height:27px;background:#c8b98b"></div><div class="t" style="left:585.9px;top:255.6px;font-size:23px;line-height:23px;color:#222;">QTSR20251218001</div><div class="t" style="left:852.1px;top:255.6px;font-size:23px;line-height:23px;color:#000;">2025-12-1</div><div class="t" style="left:970.4px;top:255.6px;font-size:23px;line-height:23px;color:#000;">Admin</div><div class="t" style="left:1083.8px;top:255.6px;font-size:23px;line-height:23px;color:#000;">0.00</div><div class="t" style="left:1199.4px;top:255.6px;font-size:23px;line-height:23px;color:#000;">2500.00</div><div class="t" style="left:1330.8px;top:255.6px;font-size:23px;line-height:23px;color:#000;">Admin</div><div class="t" style="left:1661.6px;top:256.9px;font-size:21.3px;line-height:21.3px;color:#000;">其他收入单</div><div style="left:294px;top:305px;width:1577px;height:7px;background:linear-gradient(rgba(0,0,0,0),rgba(0,0,0,0.09))"></div><div style="left:287px;top:312px;width:7px;height:871px;background:linear-gradient(90deg,rgba(0,0,0,0),rgba(0,0,0,0.09))"></div><div style="left:287px;top:305px;width:7px;height:7px;background:radial-gradient(circle at 100% 100%,rgba(0,0,0,0.09),rgba(0,0,0,0) 7px)"></div><div style="left:294px;top:312px;width:1577px;height:871px;background:#fff;border-top:1px solid #a8a8a8;border-left:1px solid #a8a8a8"></div><div style="left:295px;top:345px;width:1576px;height:7px;background:linear-gradient(#fff,#ececec)"></div><svg style="position:absolute;left:300px;top:314px" width="36" height="36" viewBox="0 0 36 36"><circle cx="15.2" cy="16.7" r="11.2" fill="#fdfdff" stroke="#d4d4dc" stroke-width="1.6"/><path d="M6.3 17 C6.3 11 10.5 8 15 8 C20 8 23.7 11.5 23.7 17.6 L11.8 17.6 C12 19.8 13.5 21 15.8 21 C17.8 21 19 20.3 19.8 19.3 L23.4 19.3 C22.3 23.2 19.3 25.8 15.2 25.8 C10 25.8 6.3 22.3 6.3 17 Z M11.9 14.8 L18.6 14.8 C18.2 12.8 17 11.6 15.2 11.6 C13.4 11.6 12.3 12.8 11.9 14.8 Z" fill="#46b82e" fill-rule="evenodd"/><path d="M6 27.5 C5 20 9 10 24.5 5.5 C14 10 9 18 8 26 Z" fill="#6ad040"/></svg><div class="t" style="left:336.3px;top:321.9px;font-size:18px;line-height:18px;color:#000;">其他收入单</div><svg style="position:absolute;left:1699px;top:330px" width="16" height="3" viewBox="0 0 16 3"><rect width="16" height="2.2" fill="#111"/></svg><svg style="position:absolute;left:1765px;top:323px" width="16" height="16" viewBox="0 0 16 16"><rect x="1" y="1" width="14" height="14" fill="none" stroke="#111" stroke-width="2"/></svg><svg style="position:absolute;left:1831px;top:323px" width="16" height="16" viewBox="0 0 16 16"><path d="M1 1 L15 15 M15 1 L1 15" stroke="#111" stroke-width="1.8"/></svg><div style="left:295px;top:352px;width:1576px;height:1px;background:#95b8e7"></div><div style="left:295px;top:352px;width:1px;height:831px;background:#95b8e7"></div><div style="left:296px;top:352px;width:1px;height:282px;background:#95b8e7"></div><div style="left:296px;top:778px;width:1px;height:339px;background:#95b8e7"></div><div style="left:297px;top:353px;width:1571px;height:45px;background:#e4edfc"></div><svg style="position:absolute;left:307px;top:365px" width="26" height="24" viewBox="0 0 26 24"><defs><linearGradient id="okg" x1="0" y1="0" x2="1" y2="1"><stop offset="0" stop-color="#a8e880"/><stop offset="1" stop-color="#3a9a28"/></linearGradient></defs><path d="M1 6.5 L3.5 5 L8 14 L24 0.5 L25 2.5 L9 20.5 Q7.5 21.5 6.5 20 Z" fill="url(#okg)" stroke="#2f8a20" stroke-width="0.9" stroke-linejoin="round"/></svg><div class="t" style="left:337.6px;top:366.9px;font-size:21.3px;line-height:21.3px;color:#0000ff;">确定</div><svg style="position:absolute;left:407px;top:363px" width="26" height="26" viewBox="0 0 26 26"><defs><linearGradient id="kg" x1="0" y1="0" x2="1" y2="1"><stop offset="0" stop-color="#fff0a0"/><stop offset="1" stop-color="#e8b830"/></linearGradient></defs><path d="M15.5 1 L21 0.5 L25 5 L24.5 10.5 L19.5 13 L15.5 13 L13 9 L13 4Z" fill="url(#kg)" stroke="#d09020" stroke-width="1"/><path d="M17.5 3.5 L20 6" stroke="#d09020" stroke-width="1"/><path d="M14 10.5 L1.5 21 L1.5 24.5 L4.5 24.5 L6 22.5 L8 22.5 L9 20 L11 19.5 L17 13.5Z" fill="url(#kg)" stroke="#d09020" stroke-width="1"/></svg><div class="t" style="left:438.3px;top:366.9px;font-size:21.3px;line-height:21.3px;color:#0000ff;">审核</div><svg style="position:absolute;left:508px;top:364px" width="26" height="25" viewBox="0 0 26 25"><defs><linearGradient id="dsg" x1="0" y1="0" x2="0" y2="1"><stop offset="0" stop-color="#ffffff"/><stop offset="1" stop-color="#dce8f8"/></linearGradient></defs><rect x="1" y="1.5" width="21.5" height="18.5" rx="1" fill="url(#dsg)" stroke="#6f9ad8" stroke-width="1.3"/><rect x="1" y="1.5" width="21.5" height="3" fill="#8fb4e8"/><path d="M7 23.5 L9 18 L21 6.5 L24.5 10 L12.5 21.5 Z" fill="#f5d24a" stroke="#c08a28" stroke-width="0.9"/><path d="M7 23.5 L9 18 L12.5 21.5Z" fill="#e8a070"/><path d="M19.5 8 L23 11.5" stroke="#f0c0a0" stroke-width="1.5"/></svg><div class="t" style="left:538.9px;top:366.9px;font-size:21.3px;line-height:21.3px;color:#0000ff;">设计</div><svg style="position:absolute;left:608px;top:365px" width="26" height="24" viewBox="0 0 26 24"><defs><linearGradient id="ppg" x1="0" y1="0" x2="0" y2="1"><stop offset="0" stop-color="#ffffff"/><stop offset="1" stop-color="#c8d8ea"/></linearGradient></defs><rect x="6.5" y="0.5" width="12" height="10" fill="url(#ppg)" stroke="#a0a0a0" stroke-width="0.8"/><rect x="1" y="7" width="24" height="12" rx="3.5" fill="#e8e8e8" stroke="#8a8a8a" stroke-width="1"/><rect x="6" y="11" width="14" height="3.5" fill="#2a8ef0"/><path d="M3.5 16 H22.5" stroke="#666" stroke-width="1.3"/><path d="M5 17 L21 17 L20.5 23 L5.5 23Z" fill="#fafafa" stroke="#8a8a8a" stroke-width="1"/></svg><div class="t" style="left:638.9px;top:366.9px;font-size:21.3px;line-height:21.3px;color:#0000ff;">打印</div><svg style="position:absolute;left:693px;top:373px" width="13" height="7" viewBox="0 0 13 7"><path d="M0 0 H13 L6.5 7Z" fill="#000"/></svg><svg style="position:absolute;left:730px;top:364px" width="25" height="25" viewBox="0 0 25 25"><rect x="1" y="3" width="14.5" height="19" fill="#7a7a7a"/><rect x="1" y="21" width="14.5" height="1.5" fill="#555"/><path d="M14.5 1.5 L24 0 V24 L14.5 22.5Z" fill="#c8823a"/><path d="M16 3 L22.5 2 V22 L16 21Z" fill="#dea060"/><circle cx="18" cy="12" r="0.9" fill="#f8e070"/><path d="M0.5 12 L7 6 V9.5 H14 V14.5 H7 V18Z" fill="#5fc060"/></svg><div class="t" style="left:759.9px;top:366.9px;font-size:21.3px;line-height:21.3px;color:#0000ff;">退出</div><div style="left:1867px;top:398px;width:1px;height:236px;background:#95b8e7"></div><div style="left:297px;top:633px;width:1571px;height:1px;background:#95b8e7"></div><div style="left:297px;top:634px;width:1574px;height:12px;background:#e6eef8"></div><div style="left:297px;top:637px;width:1574px;height:1px;background:#95b8e7"></div><div style="left:297px;top:645px;width:1574px;height:1px;background:#95b8e7"></div><div class="t" style="left:301.5px;top:413.8px;font-size:24px;line-height:24px;color:#000;">编码:</div><div style="left:614px;top:404px;width:657px;height:42px;border:1px solid #95b8e7;border-radius:6px;background:#cbcbcb"></div><div class="t" style="left:620.2px;top:415.5px;font-size:21px;line-height:21px;color:#000;">QTSR20251218001</div><div class="t" style="left:301.5px;top:463.1px;font-size:24px;line-height:24px;color:#000;">本次收付金额</div><div style="left:475px;top:453px;width:367px;height:42px;border:1px solid #95b8e7;border-radius:6px;background:#cde8cc"></div><div class="t" style="left:480.8px;top:464.3px;font-size:21px;line-height:21px;color:#000;">2500</div><div class="t" style="left:850.8px;top:463.1px;font-size:24px;line-height:24px;color:#000;">收款方式</div><div style="left:968px;top:453px;width:368px;height:42px;border:1px solid #95b8e7;border-radius:6px;background:#cde8cc;overflow:hidden"><div style="position:absolute;right:0;top:0;width:39px;height:100%;background:#d7e9ea"></div></div><svg style="position:absolute;left:1309px;top:470.0px" width="17" height="11" viewBox="0 0 17 11"><path d="M2 2 L8.5 8 L15 2" fill="none" stroke="#5cb8e0" stroke-width="3"/></svg><div class="t" style="left:975.5px;top:466.4px;font-size:20.5px;line-height:20.5px;color:#000;">现金</div><div class="t" style="left:1343.7px;top:463.1px;font-size:24px;line-height:24px;color:#000;">收款帐户</div><div style="left:1462px;top:453px;width:367px;height:42px;border:1px solid #95b8e7;border-radius:6px;background:#cde8cc;overflow:hidden"><div style="position:absolute;right:0;top:0;width:39px;height:100%;background:#d7e9ea"></div></div><svg style="position:absolute;left:1802px;top:470.0px" width="17" height="11" viewBox="0 0 17 11"><path d="M2 2 L8.5 8 L15 2" fill="none" stroke="#5cb8e0" stroke-width="3"/></svg><div class="t" style="left:1469.1px;top:466.4px;font-size:20.5px;line-height:20.5px;color:#000;">现金</div><div class="t" style="left:301.5px;top:513.6px;font-size:24px;line-height:24px;color:#000;">经手人</div><div style="left:475px;top:503px;width:367px;height:42px;border:1px solid #95b8e7;border-radius:6px;background:#cde8cc;overflow:hidden"><div style="position:absolute;right:0;top:0;width:39px;height:100%;background:#d7e9ea"></div></div><svg style="position:absolute;left:815px;top:520.0px" width="17" height="11" viewBox="0 0 17 11"><path d="M2 2 L8.5 8 L15 2" fill="none" stroke="#5cb8e0" stroke-width="3"/></svg><div class="t" style="left:481.3px;top:514.1px;font-size:21px;line-height:21px;color:#000;">Admin</div><div class="t" style="left:850.8px;top:513.6px;font-size:24px;line-height:24px;color:#000;">票号</div><div style="left:968px;top:503px;width:368px;height:42px;border:1px solid #95b8e7;border-radius:6px;background:#cde8cc"></div><div class="t" style="left:301.5px;top:564.0px;font-size:24px;line-height:24px;color:#000;">说明</div><div style="left:475px;top:553px;width:1354px;height:42px;border:1px solid #95b8e7;border-radius:6px;background:#cde8cc"></div><div style="left:297px;top:646px;width:1574px;height:45px;background:linear-gradient(#eff5ff,#e0ecff)"></div><div style="left:297px;top:691px;width:1574px;height:1px;background:#95b8e7"></div><div class="t" style="left:330.6px;top:659.4px;font-size:21.3px;line-height:21.3px;color:#0e2d5f;font-weight:bold;">属性内容</div><svg style="position:absolute;left:308px;top:703px" width="22" height="22" viewBox="0 0 22 22"><defs><radialGradient id="ga308703" cx="40%" cy="35%" r="70%"><stop offset="0" stop-color="#bfe6b4"/><stop offset="1" stop-color="#5fae55"/></radialGradient></defs><circle cx="11" cy="11" r="10.3" fill="url(#ga308703)" stroke="#6fb565" stroke-width="1"/><circle cx="11" cy="11" r="7.8" fill="none" stroke="#d8f0d2" stroke-width="0.8" opacity="0.7"/><path d="M11 6.5 V15.5 M6.5 11 H15.5" stroke="#fff" stroke-width="3.3"/></svg><div class="t" style="left:337.1px;top:704.4px;font-size:21.3px;line-height:21.3px;color:#0000ff;">增加</div><svg style="position:absolute;left:407px;top:702px" width="26" height="25" viewBox="0 0 26 25"><path d="M3 0.8 H17.5 L23.5 6.8 V23.5 H3 Z" fill="#d8e8fb" stroke="#4f86d0" stroke-width="1.3"/><path d="M3 23.5 H23.5" stroke="#3a70c0" stroke-width="1.6"/><path d="M17.5 0.8 V6.8 H23.5" fill="#eef5ff" stroke="#4f86d0" stroke-width="1"/><path d="M0.5 5 L7.5 5 L17 17.5 L10 17.5 Z" fill="#3a9632"/><path d="M17 5 L10 5 L0.5 17.5 L7.5 17.5 Z" fill="#4aa840"/><path d="M2.5 6 L9.5 16.5" stroke="#9ad88a" stroke-width="1.2"/></svg><div class="t" style="left:436.9px;top:704.4px;font-size:21.3px;line-height:21.3px;color:#0000ff;">导出</div><svg style="position:absolute;left:500px;top:696px" width="40" height="34" viewBox="0 0 40 34"><path d="M20 5.5 L26 5.5 L26 10 L28.5 11 L31 9.5 L31 15.5 L26.5 18 L21 18 L18.5 15.5 Z" fill="#c4c4c4" stroke="#8a8a8a" stroke-width="1.2" stroke-linejoin="round"/><path d="M10 29 Q7 27 8 24 L17 15 L22 20 L13 29 Q11.5 30.5 10 29 Z" fill="#94b4e4" stroke="#6a94d8" stroke-width="1.2"/></svg><div class="t" style="left:537.2px;top:704.4px;font-size:21.3px;line-height:21.3px;color:#0000ff;">列设置</div><div class="t" style="left:300.4px;top:748.5px;font-size:18.2px;line-height:18.2px;color:#000;">条形码:</div><div style="left:616px;top:741px;width:464px;height:30px;border:1px solid #767676;border-radius:4px;background:#fff"></div><div class="t" style="left:622.1px;top:748.1px;font-size:20px;line-height:20px;color:#9a9a9a;">请将光标对准这里扫码</div><div style="left:296px;top:778px;width:1532px;height:1px;background:#95b8e7"></div><div style="left:1827px;top:778px;width:1px;height:339px;background:#95b8e7"></div><div style="left:297px;top:779px;width:1530px;height:47px;background:linear-gradient(#f9f9f9,#efefef)"></div><div style="left:297px;top:826px;width:1530px;height:1px;background:#d8d8d8"></div><div style="left:297px;top:827px;width:44px;height:47px;background:linear-gradient(90deg,#fafafa,#efefef)"></div><div style="left:460px;top:827px;width:875px;height:47px;background:#b0ffc0"></div><div style="left:297px;top:874px;width:1038px;height:1px;background:repeating-linear-gradient(90deg,#ccc 0 1px,transparent 1px 2px)"></div><div style="left:297px;top:875px;width:44px;height:47px;background:linear-gradient(90deg,#fafafa,#efefef)"></div><div style="left:460px;top:875px;width:875px;height:47px;background:#b0ffc0"></div><div style="left:297px;top:922px;width:1038px;height:1px;background:repeating-linear-gradient(90deg,#ccc 0 1px,transparent 1px 2px)"></div><div style="left:297px;top:1066px;width:1530px;height:1px;background:#d8d8d8"></div><div style="left:297px;top:1067px;width:44px;height:47px;background:linear-gradient(90deg,#fafafa,#efefef)"></div><div style="left:460px;top:1067px;width:875px;height:47px;background:#b0ffc0"></div><div style="left:297px;top:1114px;width:1038px;height:1px;background:repeating-linear-gradient(90deg,#ccc 0 1px,transparent 1px 2px)"></div><div style="left:341px;top:779px;width:1px;height:48px;background:repeating-linear-gradient(#ccc 0 1px,transparent 1px 2px)"></div><div style="left:341px;top:827px;width:1px;height:96px;background:repeating-linear-gradient(#ccc 0 1px,transparent 1px 2px)"></div><div style="left:341px;top:1067px;width:1px;height:48px;background:repeating-linear-gradient(#ccc 0 1px,transparent 1px 2px)"></div><div style="left:460px;top:779px;width:1px;height:48px;background:repeating-linear-gradient(#ccc 0 1px,transparent 1px 2px)"></div><div style="left:460px;top:827px;width:1px;height:96px;background:repeating-linear-gradient(#ccc 0 1px,transparent 1px 2px)"></div><div style="left:460px;top:1067px;width:1px;height:48px;background:repeating-linear-gradient(#ccc 0 1px,transparent 1px 2px)"></div><div style="left:642px;top:779px;width:1px;height:48px;background:repeating-linear-gradient(#ccc 0 1px,transparent 1px 2px)"></div><div style="left:642px;top:827px;width:1px;height:96px;background:repeating-linear-gradient(#ccc 0 1px,transparent 1px 2px)"></div><div style="left:642px;top:1067px;width:1px;height:48px;background:repeating-linear-gradient(#ccc 0 1px,transparent 1px 2px)"></div><div style="left:918px;top:779px;width:1px;height:48px;background:repeating-linear-gradient(#ccc 0 1px,transparent 1px 2px)"></div><div style="left:918px;top:827px;width:1px;height:96px;background:repeating-linear-gradient(#ccc 0 1px,transparent 1px 2px)"></div><div style="left:918px;top:1067px;width:1px;height:48px;background:repeating-linear-gradient(#ccc 0 1px,transparent 1px 2px)"></div><div style="left:1115px;top:779px;width:1px;height:48px;background:repeating-linear-gradient(#ccc 0 1px,transparent 1px 2px)"></div><div style="left:1115px;top:827px;width:1px;height:96px;background:repeating-linear-gradient(#ccc 0 1px,transparent 1px 2px)"></div><div style="left:1115px;top:1067px;width:1px;height:48px;background:repeating-linear-gradient(#ccc 0 1px,transparent 1px 2px)"></div><div style="left:1335px;top:779px;width:1px;height:48px;background:repeating-linear-gradient(#ccc 0 1px,transparent 1px 2px)"></div><div style="left:1335px;top:827px;width:1px;height:96px;background:repeating-linear-gradient(#ccc 0 1px,transparent 1px 2px)"></div><div style="left:1335px;top:1067px;width:1px;height:48px;background:repeating-linear-gradient(#ccc 0 1px,transparent 1px 2px)"></div><div class="t" style="left:379.5px;top:793.8px;font-size:21.3px;line-height:21.3px;color:#000;">操作</div><div class="t" style="left:466.6px;top:793.8px;font-size:21.3px;line-height:21.3px;color:#000;">收入类别</div><div class="t" style="left:648.8px;top:793.8px;font-size:21.3px;line-height:21.3px;color:#000;">收入名称</div><div class="t" style="left:925.1px;top:793.8px;font-size:21.3px;line-height:21.3px;color:#000;">收款金额</div><div class="t" style="left:1122.1px;top:793.8px;font-size:21.3px;line-height:21.3px;color:#000;">摘要</div><div class="t" style="left:312.9px;top:840.0px;font-size:23px;line-height:23px;color:#000;">1</div><svg style="position:absolute;left:353px;top:839px" width="22" height="24" viewBox="0 0 22 24"><defs><linearGradient id="ua839" x1="0" y1="0" x2="0" y2="1"><stop offset="0" stop-color="#a0f040"/><stop offset="1" stop-color="#1a9a10"/></linearGradient><radialGradient id="ush839"><stop offset="0" stop-color="rgba(0,0,0,0.3)"/><stop offset="1" stop-color="rgba(0,0,0,0)"/></radialGradient></defs><ellipse cx="11" cy="20.5" rx="10" ry="2" fill="url(#ush839)"/><path d="M11 1 L20.5 12.5 Q20.5 14 19 14 L14.5 14 L14.5 20 Q14.5 21 13.5 21 L8.5 21 Q7.5 21 7.5 20 L7.5 14 L3 14 Q1.5 14 1.5 12.5 Z" fill="url(#ua839)"/></svg><div style="left:380px;top:846px;width:2px;height:21px;background:#000"></div><svg style="position:absolute;left:391px;top:839px" width="22" height="24" viewBox="0 0 22 24"><defs><linearGradient id="da839" x1="0" y1="0" x2="0" y2="1"><stop offset="0" stop-color="#b0f070"/><stop offset="0.4" stop-color="#50c020"/><stop offset="1" stop-color="#1a9a10"/></linearGradient><radialGradient id="dsh839"><stop offset="0" stop-color="rgba(0,0,0,0.3)"/><stop offset="1" stop-color="rgba(0,0,0,0)"/></radialGradient></defs><ellipse cx="11" cy="20.5" rx="10" ry="2" fill="url(#dsh839)"/><path d="M11 21.5 L20.5 8.5 Q20.5 7 19 7 L14.5 7 L14.5 1.5 Q14.5 0.5 13.5 0.5 L8.5 0.5 Q7.5 0.5 7.5 1.5 L7.5 7 L3 7 Q1.5 7 1.5 8.5 Z" fill="url(#da839)"/></svg><div style="left:418px;top:846px;width:2px;height:21px;background:#000"></div><svg style="position:absolute;left:425px;top:833px" width="30" height="30" viewBox="0 0 30 30"><rect width="30" height="30" fill="#f3f3f6"/><path d="M9.5 4.5 V1 H17.5 V4.5" fill="none" stroke="#c6485a" stroke-width="1.6"/><rect x="3" y="5" width="22" height="4" fill="#f0a9ae" stroke="#c6485a" stroke-width="1.6"/><path d="M5 10 L6.5 27 H17" fill="none" stroke="#c6485a" stroke-width="1.8"/><path d="M9 13 L9.5 24 M13 13 L13.2 24 M17.5 13 L17.5 17" stroke="#c6485a" stroke-width="1.6"/><circle cx="21.5" cy="23" r="6" fill="#f7eef0" stroke="#c6485a" stroke-width="1.6"/><path d="M19 20.5 L24 25.5 M24 20.5 L19 25.5" stroke="#c6485a" stroke-width="1.5"/></svg><div class="t" style="left:466.6px;top:841.9px;font-size:21.3px;line-height:21.3px;color:#000;">租金收入</div><div class="t" style="left:648.8px;top:841.9px;font-size:21.3px;line-height:21.3px;color:#000;">8月份租金</div><div class="t" style="left:924.3px;top:839.1px;font-size:24px;line-height:24px;color:#000;">2000.00</div><div class="t" style="left:312.9px;top:888.0px;font-size:23px;line-height:23px;color:#000;">2</div><svg style="position:absolute;left:353px;top:887px" width="22" height="24" viewBox="0 0 22 24"><defs><linearGradient id="ua887" x1="0" y1="0" x2="0" y2="1"><stop offset="0" stop-color="#a0f040"/><stop offset="1" stop-color="#1a9a10"/></linearGradient><radialGradient id="ush887"><stop offset="0" stop-color="rgba(0,0,0,0.3)"/><stop offset="1" stop-color="rgba(0,0,0,0)"/></radialGradient></defs><ellipse cx="11" cy="20.5" rx="10" ry="2" fill="url(#ush887)"/><path d="M11 1 L20.5 12.5 Q20.5 14 19 14 L14.5 14 L14.5 20 Q14.5 21 13.5 21 L8.5 21 Q7.5 21 7.5 20 L7.5 14 L3 14 Q1.5 14 1.5 12.5 Z" fill="url(#ua887)"/></svg><div style="left:380px;top:894px;width:2px;height:21px;background:#000"></div><svg style="position:absolute;left:391px;top:887px" width="22" height="24" viewBox="0 0 22 24"><defs><linearGradient id="da887" x1="0" y1="0" x2="0" y2="1"><stop offset="0" stop-color="#b0f070"/><stop offset="0.4" stop-color="#50c020"/><stop offset="1" stop-color="#1a9a10"/></linearGradient><radialGradient id="dsh887"><stop offset="0" stop-color="rgba(0,0,0,0.3)"/><stop offset="1" stop-color="rgba(0,0,0,0)"/></radialGradient></defs><ellipse cx="11" cy="20.5" rx="10" ry="2" fill="url(#dsh887)"/><path d="M11 21.5 L20.5 8.5 Q20.5 7 19 7 L14.5 7 L14.5 1.5 Q14.5 0.5 13.5 0.5 L8.5 0.5 Q7.5 0.5 7.5 1.5 L7.5 7 L3 7 Q1.5 7 1.5 8.5 Z" fill="url(#da887)"/></svg><div style="left:418px;top:894px;width:2px;height:21px;background:#000"></div><svg style="position:absolute;left:425px;top:881px" width="30" height="30" viewBox="0 0 30 30"><rect width="30" height="30" fill="#f3f3f6"/><path d="M9.5 4.5 V1 H17.5 V4.5" fill="none" stroke="#c6485a" stroke-width="1.6"/><rect x="3" y="5" width="22" height="4" fill="#f0a9ae" stroke="#c6485a" stroke-width="1.6"/><path d="M5 10 L6.5 27 H17" fill="none" stroke="#c6485a" stroke-width="1.8"/><path d="M9 13 L9.5 24 M13 13 L13.2 24 M17.5 13 L17.5 17" stroke="#c6485a" stroke-width="1.6"/><circle cx="21.5" cy="23" r="6" fill="#f7eef0" stroke="#c6485a" stroke-width="1.6"/><path d="M19 20.5 L24 25.5 M24 20.5 L19 25.5" stroke="#c6485a" stroke-width="1.5"/></svg><div class="t" style="left:466.6px;top:889.9px;font-size:21.3px;line-height:21.3px;color:#000;">资产处置收入</div><div class="t" style="left:648.8px;top:889.9px;font-size:21.3px;line-height:21.3px;color:#000;">限制资产处置</div><div class="t" style="left:924.3px;top:887.1px;font-size:24px;line-height:24px;color:#000;">500.00</div><div class="t" style="left:379.6px;top:1081.4px;font-size:21.3px;line-height:21.3px;color:#0000ff;">合计</div><div style="left:380px;top:1101px;width:42px;height:1.5px;background:#0000ff"></div><div style="left:297px;top:1116px;width:1574px;height:1px;background:#95b8e7"></div><div style="left:297px;top:1176px;width:1574px;height:1px;background:#95b8e7"></div><div class="t" style="left:300.4px;top:1133.7px;font-size:24px;line-height:24px;color:#000;">制单人</div><div style="left:424px;top:1123px;width:261px;height:42px;border:1px solid #95b8e7;border-radius:6px;background:#cbcbcb"></div><div class="t" style="left:429.3px;top:1133.6px;font-size:21px;line-height:21px;color:#000;">Admin</div><div class="t" style="left:692.9px;top:1133.7px;font-size:24px;line-height:24px;color:#000;">制单时间</div><div style="left:815px;top:1123px;width:263px;height:42px;border:1px solid #95b8e7;border-radius:6px;background:#cbcbcb"></div><div class="t" style="left:822.4px;top:1133.6px;font-size:21px;line-height:21px;color:#000;">2025-12-18 09:24:10</div><div class="t" style="left:1086.8px;top:1133.7px;font-size:24px;line-height:24px;color:#000;">审核人</div><div style="left:1209px;top:1123px;width:262px;height:42px;border:1px solid #95b8e7;border-radius:6px;background:#cbcbcb"></div><div class="t" style="left:1479.5px;top:1133.7px;font-size:24px;line-height:24px;color:#000;">审核时间</div><div style="left:1602px;top:1123px;width:262px;height:42px;border:1px solid #95b8e7;border-radius:6px;background:#cbcbcb"></div>
</body></html>
